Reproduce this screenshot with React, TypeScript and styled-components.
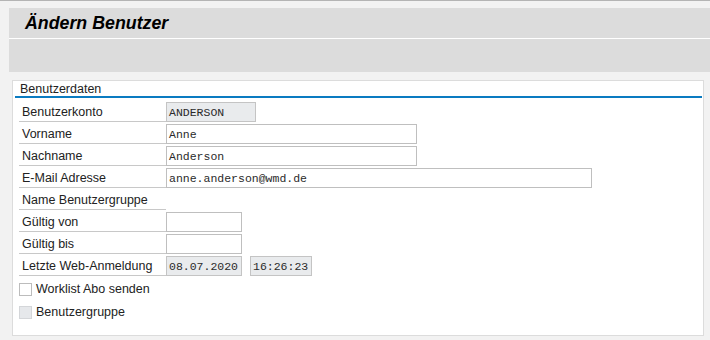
import React, { FC } from 'react';
import styled, { createGlobalStyle } from 'styled-components';

const GlobalStyle = createGlobalStyle`
  html, body {
    margin: 0;
    padding: 0;
    background: #f2f2f2;
  }
  body {
    font-family: "Liberation Sans", Arial, sans-serif;
    font-size: 12.5px;
    color: #222;
  }
`;

const Page = styled.div`
  width: 710px;
  height: 340px;
  box-sizing: border-box;
  border-top: 1px solid #b4b4b4;
  overflow: hidden;
`;

const Header = styled.div`
  margin: 7px 0 0 9px;
  display: flex;
  flex-direction: column;
  gap: 1px;
  background: #fff;
`;

const TitleBar = styled.div`
  height: 30px;
  background: #dcdcdc;
  display: flex;
  align-items: center;
  padding-left: 16px;
`;

const Title = styled.h1`
  margin: 0;
  font-size: 17.8px;
  font-weight: bold;
  font-style: italic;
  color: #000;
`;

const Toolbar = styled.div`
  height: 33px;
  background: #dcdcdc;
`;

const Panel = styled.section`
  margin: 8px 0 0 12px;
  width: 692px;
  height: 256px;
  box-sizing: border-box;
  background: #fff;
  border: 1px solid #dcdcdc;
  padding: 0 1px 0 2px;
`;

const PanelTitle = styled.div`
  height: 15px;
  line-height: 16px;
  padding-left: 5px;
  border-bottom: 2px solid #0a7bc1;
  color: #222;
`;

const Form = styled.div`
  padding: 2px 0 0 4px;
  display: flex;
  flex-direction: column;
`;

const Row = styled.div`
  height: 22px;
  display: flex;
  align-items: flex-end;
`;

const Label = styled.div`
  width: 147px;
  height: 22px;
  box-sizing: border-box;
  padding: 5px 0 0 3px;
  border-bottom: 1px solid #c8c8c8;
  white-space: nowrap;
`;

const Field = styled.div<{ $width: number; $readOnly?: boolean }>`
  width: ${(p) => p.$width}px;
  height: 20px;
  box-sizing: border-box;
  border: 1px solid ${(p) => (p.$readOnly ? '#c4c4c4' : '#bfbfbf')};
  background: ${(p) => (p.$readOnly ? '#e9ebed' : '#fff')};
  font-family: "Liberation Mono", "Courier New", monospace;
  font-size: 11.5px;
  line-height: 19px;
  padding-left: 2px;
  color: #2a2a2a;
  white-space: nowrap;
  overflow: hidden;
  & + & {
    margin-left: 8px;
  }
`;

const CheckRow = styled.label`
  display: flex;
  align-items: center;
  gap: 4px;
  height: 13px;
  margin-top: 7px;
  & + & {
    margin-top: 10px;
  }
`;

const Box = styled.span<{ $disabled?: boolean }>`
  width: 13px;
  height: 13px;
  box-sizing: border-box;
  border: 1px solid ${(p) => (p.$disabled ? '#d4d6d9' : '#bcbcbc')};
  background: ${(p) => (p.$disabled ? '#e6e8eb' : '#fff')};
`;

const CheckText = styled.span`
  line-height: 13px;
`;

type FieldSpec = { value: string; width: number; readOnly?: boolean };
type RowSpec = { label: string; fields: FieldSpec[] };

const rows: RowSpec[] = [
  { label: 'Benutzerkonto', fields: [{ value: 'ANDERSON', width: 90, readOnly: true }] },
  { label: 'Vorname', fields: [{ value: 'Anne', width: 251 }] },
  { label: 'Nachname', fields: [{ value: 'Anderson', width: 251 }] },
  { label: 'E-Mail Adresse', fields: [{ value: 'anne.anderson@wmd.de', width: 426 }] },
  { label: 'Name Benutzergruppe', fields: [] },
  { label: 'Gültig von', fields: [{ value: '', width: 76 }] },
  { label: 'Gültig bis', fields: [{ value: '', width: 76 }] },
  {
    label: 'Letzte Web-Anmeldung',
    fields: [
      { value: '08.07.2020', width: 76, readOnly: true },
      { value: '16:26:23', width: 62, readOnly: true }
    ]
  }
];

const App: FC = () => (
  <Page>
    <GlobalStyle />
    <Header>
      <TitleBar>
        <Title>Ändern Benutzer</Title>
      </TitleBar>
      <Toolbar />
    </Header>
    <Panel>
      <PanelTitle>Benutzerdaten</PanelTitle>
      <Form>
        {rows.map((row) => (
          <Row key={row.label}>
            <Label>{row.label}</Label>
            {row.fields.map((f, i) => (
              <Field key={i} $width={f.width} $readOnly={f.readOnly}>
                {f.value}
              </Field>
            ))}
          </Row>
        ))}
        <CheckRow>
          <Box />
          <CheckText>Worklist Abo senden</CheckText>
        </CheckRow>
        <CheckRow>
          <Box $disabled />
          <CheckText>Benutzergruppe</CheckText>
        </CheckRow>
      </Form>
    </Panel>
  </Page>
);

export default App;
